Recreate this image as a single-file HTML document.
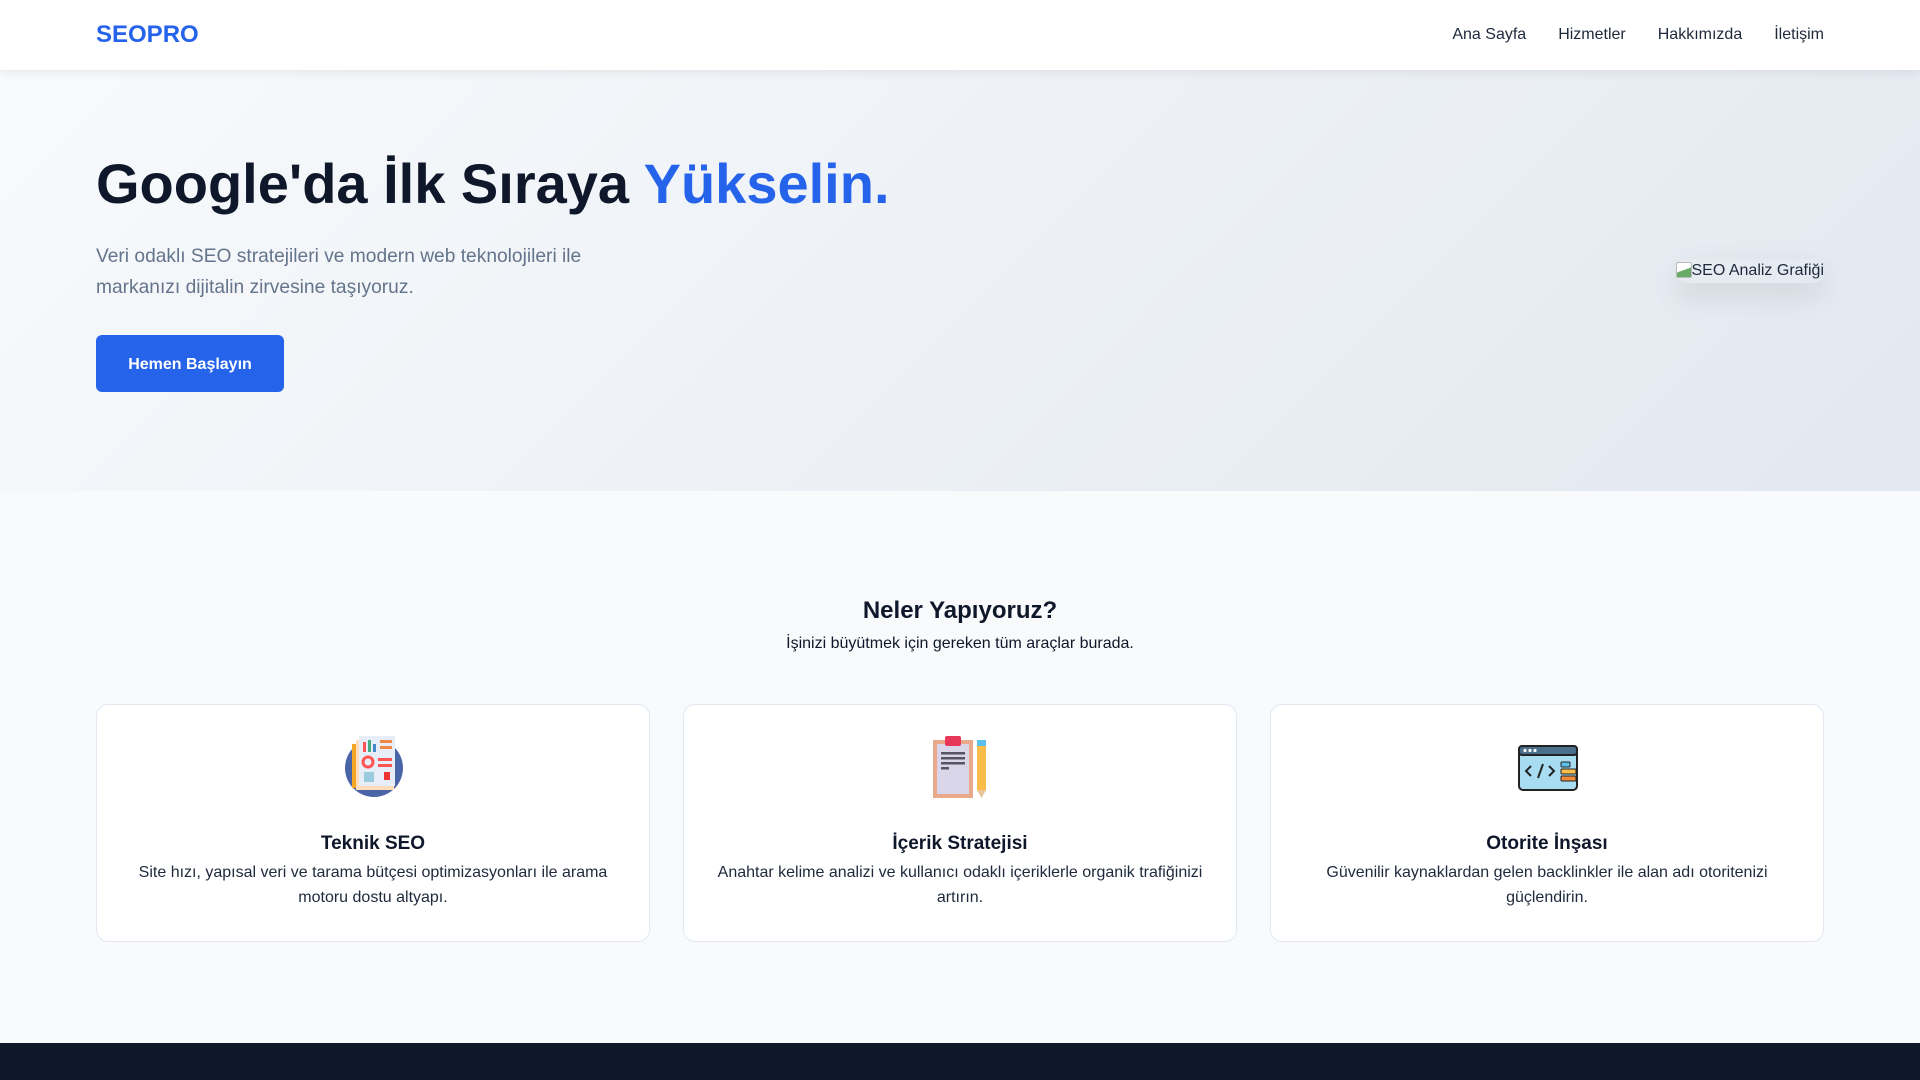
<!DOCTYPE html>
<html><head><meta charset="utf-8"><style>
*{margin:0;padding:0;box-sizing:border-box}
body{width:1920px;height:1080px;overflow:hidden;font-family:"Liberation Sans",sans-serif;background:#f8fafc;color:#0f172a}
nav{position:absolute;top:0;left:0;width:1920px;height:70px;background:#fff;box-shadow:0 2px 10px rgba(0,0,0,.08);z-index:2}
.logo{position:absolute;left:96px;top:21px;font-size:24px;font-weight:bold;color:#2563eb;line-height:28px}
.links{position:absolute;right:96px;top:26px;font-size:16px;line-height:18px;color:#1e293b}
.links span{margin-left:32px}
.hero{position:absolute;top:70px;left:0;width:1920px;height:421px;background:linear-gradient(135deg,#f8fafc 0%,#e2e8f0 100%)}
h1{position:absolute;left:96px;top:80px;font-size:56px;line-height:68px;font-weight:bold;color:#0f172a;white-space:nowrap}
h1 span{color:#2563eb}
.sub{position:absolute;left:96px;top:171px;width:530px;font-size:19.2px;line-height:31px;color:#64748b}
.btn{position:absolute;left:96px;top:265px;width:188px;height:57px;background:#2563eb;border-radius:6px;color:#fff;font-weight:bold;font-size:16px;line-height:59px;text-align:center}
.alt{position:absolute;right:96px;top:189px;font-size:16px;line-height:24px;color:#1e293b;padding-left:16px;border-radius:12px;box-shadow:0 12px 30px rgba(0,0,0,.1)}
.alt i{position:absolute;left:0;top:3px;width:16px;height:16px;border:1px solid #bbb;border-radius:2px;background:linear-gradient(160deg,#fff 50%,#6a6 50%)}
h2{position:absolute;top:596px;left:0;width:1920px;text-align:center;font-size:24px;line-height:30px;font-weight:bold}
.sec{position:absolute;top:634px;left:0;width:1920px;text-align:center;font-size:16px;line-height:20px}
.card{position:absolute;top:704px;width:554px;height:238px;background:#fff;border:1px solid #e2e8f0;border-radius:12px;text-align:center}
.card svg{position:absolute;left:247px;top:31px}
.card h3{position:absolute;top:128px;left:0;width:100%;font-size:19px;line-height:22px}
.card p{position:absolute;top:155px;left:24px;right:24px;font-size:16px;line-height:25px;color:#1e293b}
footer{position:absolute;top:1043px;left:0;width:1920px;height:37px;background:#0f172a}
</style></head><body>
<nav><div class="logo">SEOPRO</div><div class="links"><span>Ana Sayfa</span><span>Hizmetler</span><span>Hakkımızda</span><span>İletişim</span></div></nav>
<div class="hero">
<h1>Google'da İlk Sıraya <span>Yükselin.</span></h1>
<div class="sub">Veri odaklı SEO stratejileri ve modern web teknolojileri ile markanızı dijitalin zirvesine taşıyoruz.</div>
<div class="btn">Hemen Başlayın</div>
<div class="alt"><i></i>SEO Analiz Grafiği</div>
</div>
<h2>Neler Yapıyoruz?</h2>
<div class="sec">İşinizi büyütmek için gereken tüm araçlar burada.</div>
<div class="card" style="left:96px"><svg width="60" height="62" viewBox="0 0 60 62"><circle cx="30" cy="32" r="29" fill="#4a64a8"/><rect x="8" y="8" width="30" height="44" fill="#f5a623"/><rect x="12" y="4" width="38" height="50" fill="#fdb"/><rect x="15" y="0" width="36" height="50" fill="#e8eef8"/><rect x="19" y="6" width="3" height="10" fill="#f55"/><rect x="24" y="4" width="3" height="12" fill="#4a8"/><rect x="29" y="8" width="3" height="8" fill="#48c"/><rect x="36" y="4" width="12" height="3" fill="#e84"/><rect x="36" y="10" width="12" height="3" fill="#e84"/><circle cx="24" cy="26" r="5" fill="none" stroke="#f55" stroke-width="3"/><rect x="34" y="22" width="14" height="3" fill="#f55"/><rect x="34" y="28" width="14" height="3" fill="#f55"/><rect x="20" y="36" width="10" height="10" fill="#9cd"/><rect x="40" y="36" width="6" height="8" fill="#e33"/></svg><h3>Teknik SEO</h3><p>Site hızı, yapısal veri ve tarama bütçesi optimizasyonları ile arama motoru dostu altyapı.</p></div>
<div class="card" style="left:683px"><svg width="60" height="62" viewBox="0 0 60 62"><rect x="2" y="4" width="40" height="58" fill="#e9a98a"/><rect x="6" y="8" width="32" height="50" fill="#d9d6ea"/><rect x="14" y="0" width="16" height="10" rx="2" fill="#e8385a"/><rect x="10" y="16" width="24" height="2.5" fill="#556"/><rect x="10" y="21" width="24" height="2.5" fill="#556"/><rect x="10" y="26" width="24" height="2.5" fill="#556"/><rect x="10" y="31" width="8" height="2.5" fill="#556"/><rect x="46" y="4" width="9" height="6" fill="#5bc0eb"/><rect x="46" y="10" width="9" height="44" fill="#fbbd4a"/><path d="M46 54 L55 54 L50.5 62Z" fill="#e5c49a"/></svg><h3>İçerik Stratejisi</h3><p>Anahtar kelime analizi ve kullanıcı odaklı içeriklerle organik trafiğinizi artırın.</p></div>
<div class="card" style="left:1270px"><svg width="60" height="62" viewBox="0 0 60 62"><rect x="1" y="10" width="58" height="44" rx="4" fill="#a8dcf0" stroke="#222" stroke-width="2"/><rect x="1" y="10" width="58" height="9" rx="3" fill="#4a6f8a" stroke="#222" stroke-width="2"/><circle cx="7" cy="14.5" r="1.6" fill="#fff"/><circle cx="12" cy="14.5" r="1.6" fill="#fff"/><circle cx="17" cy="14.5" r="1.6" fill="#fff"/><path d="M13 30 L8 35 L13 40 M25 28 L20 42 M31 30 L36 35 L31 40" stroke="#222" stroke-width="2" fill="none"/><rect x="43" y="26" width="9" height="5" rx="1" fill="#5bc0eb" stroke="#222"/><rect x="43" y="33" width="15" height="5" rx="1" fill="#fbbd4a" stroke="#222"/><rect x="43" y="40" width="15" height="5" rx="1" fill="#f08a3a" stroke="#222"/></svg><h3>Otorite İnşası</h3><p>Güvenilir kaynaklardan gelen backlinkler ile alan adı otoritenizi güçlendirin.</p></div>
<footer></footer>
</body></html>
